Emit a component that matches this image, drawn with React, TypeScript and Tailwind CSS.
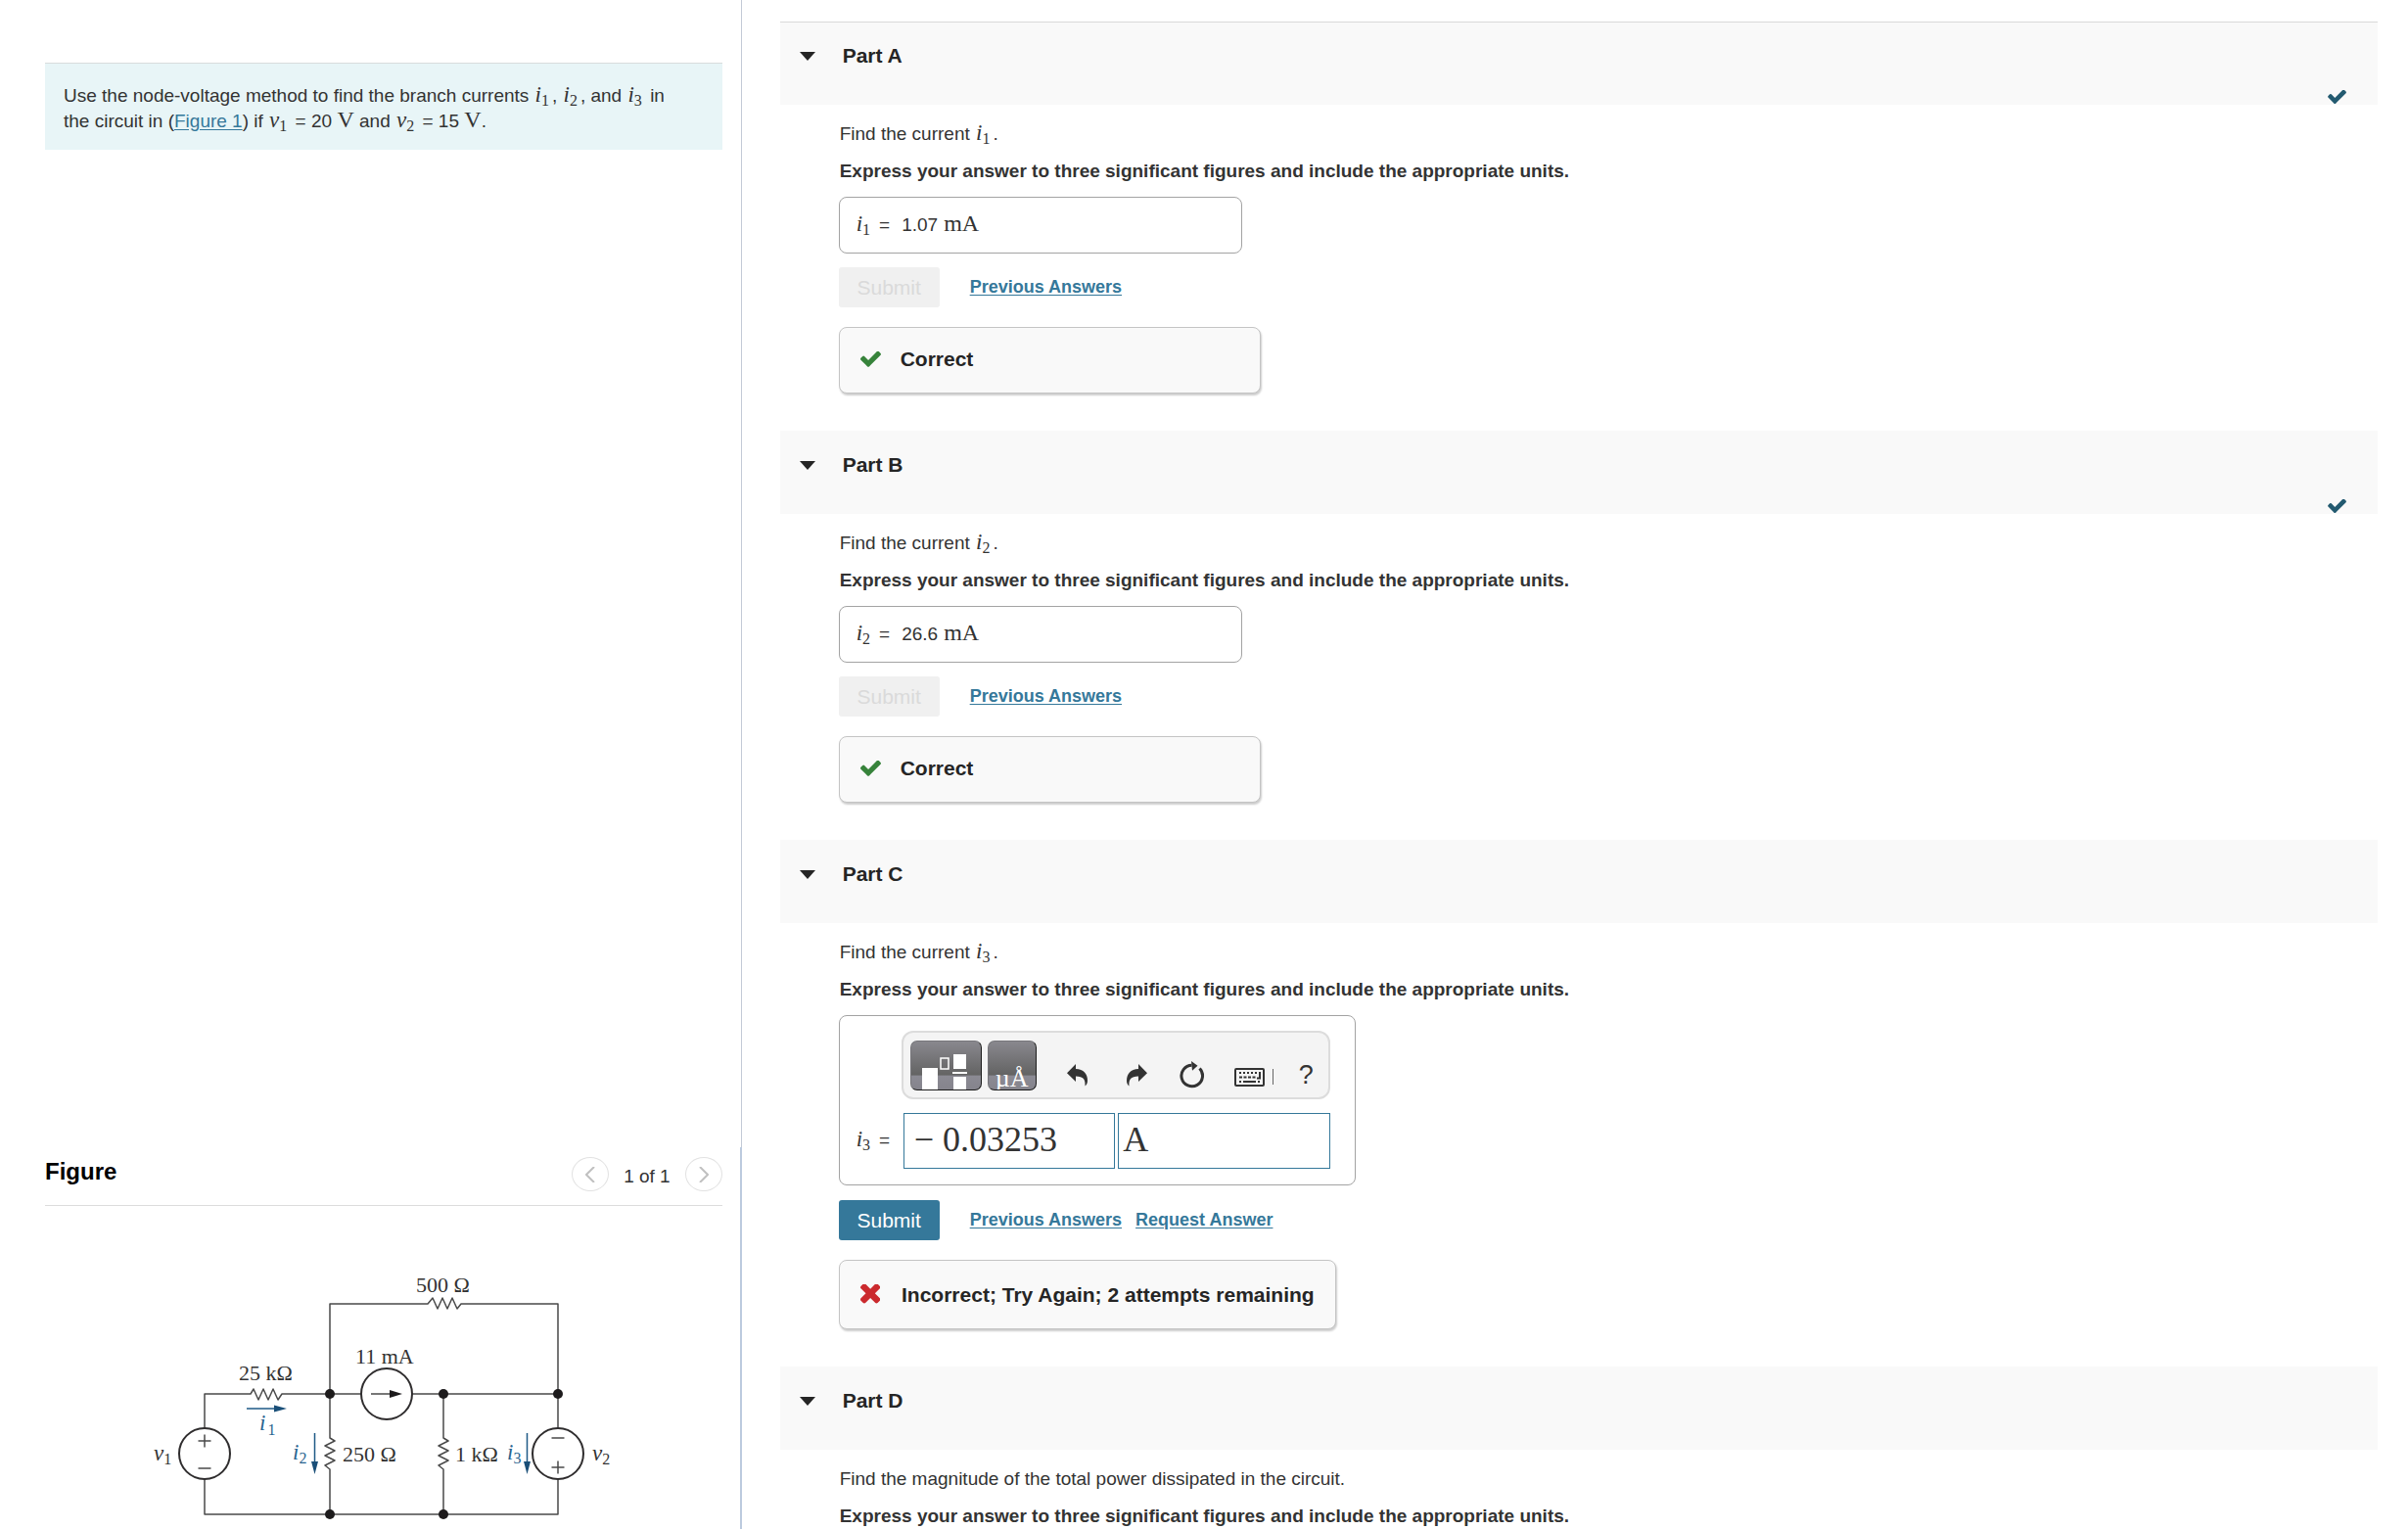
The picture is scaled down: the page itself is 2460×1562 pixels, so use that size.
import React, { useState } from "react";

function MathVar({ name, sub }: { name: string; sub: string }) {
  return (
    <span className="mr-[3px] ml-px font-['Liberation_Serif',serif] text-[23px] leading-none italic whitespace-nowrap">
      {name}
      <sub className="text-[16px] not-italic">{sub}</sub>
    </span>
  );
}

function Unit({ children }: { children: React.ReactNode }) {
  return <span className="font-['Liberation_Serif',serif] text-[24px] leading-none">{children}</span>;
}

function CheckIcon({ className }: { className: string }) {
  return (
    <svg viewBox="121 370 1550 1152" className={className} fill="currentColor" aria-hidden="true">
      <path d="M1671 566q0 40-28 68l-724 724-136 136q-28 28-68 28t-68-28l-136-136-362-362q-28-28-28-68t28-68l136-136q28-28 68-28t68 28l294 295 656-657q28-28 68-28t68 28l136 136q28 28 28 68z" />
    </svg>
  );
}

function CrossIcon() {
  return (
    <svg viewBox="302 434 1188 1188" className="size-[21px] text-[#cb2a2e]" fill="currentColor" aria-hidden="true">
      <path d="M1490 1322q0 40-28 68l-136 136q-28 28-68 28t-68-28l-294-294-294 294q-28 28-68 28t-68-28l-136-136q-28-28-28-68t28-68l294-294-294-294q-28-28-28-68t28-68l136-136q28-28 68-28t68 28l294 294 294-294q28-28 68-28t68 28l136 136q28 28 28 68t-28 68l-294 294 294 294q28 28 28 68z" />
    </svg>
  );
}

const linkClass = "text-[18px] font-bold text-[#35789a] underline underline-offset-2 whitespace-nowrap";

function Part({
  letter,
  done,
  first,
  question,
  children,
}: {
  letter: string;
  done?: boolean;
  first?: boolean;
  question: React.ReactNode;
  children?: React.ReactNode;
}) {
  return (
    <section>
      <header
        className={
          "flex h-[85px] justify-between border-t bg-[#f9f9f9] pl-5 pr-8 " +
          (first ? "border-[#d9d9d9]" : "border-[#f9f9f9]")
        }
      >
        <button type="button" aria-expanded="true" className="flex h-[68px] items-center gap-7 text-[21px] font-bold text-[#252525]">
          <svg viewBox="0 0 16 9" className="h-[9px] w-4" fill="currentColor" aria-hidden="true">
            <path d="M0 0h16L8 9z" />
          </svg>
          <span>Part {letter}</span>
        </button>
        {done && <CheckIcon className="mb-px h-[14px] w-[19px] self-end text-[#235a70]" />}
      </header>
      <div className="pt-[17px] pl-[61px]">
        <p className="mb-[13px] h-[25px] leading-[25px]">{question}</p>
        <p className="mb-[14px] leading-[25px] font-bold">
          Express your answer to three significant figures and include the appropriate units.
        </p>
        {children}
      </div>
    </section>
  );
}

function SolvedAnswer({ sub, value }: { sub: string; value: string }) {
  return (
    <div className="-ml-px pb-[38px]">
      <div className="flex h-[58px] w-[412px] items-center rounded-lg border border-[#a3a3a3] px-4">
        <div className="flex items-baseline">
          <MathVar name="i" sub={sub} />
          <span className="mr-3 ml-[6px]">=</span>
          <span className="mr-[6px]">{value}</span>
          <Unit>mA</Unit>
        </div>
      </div>
      <div className="mt-[14px] flex items-center gap-[31px]">
        <button type="button" disabled className="h-[41px] w-[103px] rounded-[3px] bg-[#f0f0f0] text-[21px] text-[#dadada]">
          Submit
        </button>
        <a href="#previous" className={linkClass}>
          Previous Answers
        </a>
      </div>
      <div className="mt-5 flex h-[68px] w-[431px] items-center gap-5 rounded-lg border border-[#c4c4c4] bg-[#f9f9f9] px-[21px] pb-[2px] text-[21px] font-bold text-[#252525] shadow-[1px_2px_2px_rgba(0,0,0,0.2)]">
        <CheckIcon className="h-4 w-[21px] text-[#37833b]" />
        Correct
      </div>
    </div>
  );
}

const darkButton =
  "flex h-[51px] justify-center rounded-[7px] border border-t-[#77767b] border-l-[#77767b] border-r-[#1d1d1d] border-b-[#1d1d1d] bg-[linear-gradient(to_bottom,#89888e_0%,#636363_70%,#8b8a93_71%,#85848c_100%)] overflow-hidden";

function MathEditor() {
  const [value, setValue] = useState("\u2212 0.03253");
  const [units, setUnits] = useState("A");
  const field =
    "h-[57px] w-full min-w-0 border border-[#35789a] bg-white pb-[3px] font-['Liberation_Serif',serif] text-[36px] text-[#333] outline-none";
  return (
    <div className="h-[174px] w-[528px] rounded-lg border border-[#a3a3a3] pt-[15px] pr-[25px] pl-4">
      <div className="ml-[47px] flex h-[70px] items-center rounded-xl border-2 border-[#dcdcdc] bg-[#f4f4f4] pl-[7px] text-[#333]">
        <button type="button" aria-label="Templates" className={darkButton + " w-[73px]"}>
          <svg viewBox="0 0 71 49" className="block h-[49px] w-[71px]" aria-hidden="true">
            <rect x="11" y="27" width="16" height="22" fill="#fff" />
            <rect x="30" y="17" width="8" height="11" fill="none" stroke="#fff" strokeWidth="1.5" />
            <rect x="43" y="13" width="13" height="15" fill="#fff" />
            <rect x="42" y="31" width="15" height="2" fill="#fff" />
            <rect x="43" y="36" width="13" height="13" fill="#fff" />
          </svg>
        </button>
        <button
          type="button"
          aria-label="Symbols"
          className={darkButton + " ml-[6px] w-[50px] items-start pt-5 font-['Liberation_Serif',serif] text-[26px] leading-[36px] text-white"}
        >
          µÅ
        </button>
        <button type="button" aria-label="Undo" className="mt-5 ml-[31px]">
          <svg viewBox="0 0 21 23" className="h-[23px] w-[21px]" fill="currentColor">
            <path d="M0 9.3 9 0v5c8 0 12 5 12 12 0 2.500-1 4.500-2.500 5.500C19 16 17 12.500 9 12.500V18z" />
          </svg>
        </button>
        <button type="button" aria-label="Redo" className="mt-5 ml-[40px]">
          <svg viewBox="0 0 21 23" className="h-[23px] w-[21px]" fill="currentColor">
            <path d="M21 9.300 12 0v5C4 5 0 10 0 17c0 2.500 1 4.500 2.500 5.500C2 16 4 12.500 12 12.500V18z" />
          </svg>
        </button>
        <button type="button" aria-label="Reset" className="mt-5 ml-[33px]">
          <svg viewBox="0 0 26 28" className="h-7 w-[26px]">
            <path d="M20.500 7.500a10.800 10.800 0 1 1-8-3.300" fill="none" stroke="currentColor" strokeWidth="3" />
            <path d="M12 0l6.500 4.800L13 9.800z" fill="currentColor" />
          </svg>
        </button>
        <button type="button" aria-label="Keyboard shortcuts" className="mt-6 ml-[30px]">
          <svg viewBox="0 0 31 19" className="h-[19px] w-[31px]">
            <rect x="1" y="1" width="29" height="17" rx="1" fill="none" stroke="currentColor" strokeWidth="2" />
            <path d="M5 5h18" stroke="currentColor" strokeWidth="2" strokeDasharray="2 2" />
            <path d="M5 9.500h18" stroke="currentColor" strokeWidth="2" strokeDasharray="3 1.500" />
            <path d="M26 4v6.500h-3M5 14h2M9 14h13M24 14h2" fill="none" stroke="currentColor" strokeWidth="2" />
          </svg>
        </button>
        <span className="mt-6 ml-2 h-4 w-px bg-[#666]" />
        <button type="button" aria-label="Help" className="mt-5 ml-[26px] text-[27px] leading-none">
          ?
        </button>
      </div>
      <div className="mt-[14px] flex items-center gap-[3px]">
        <label htmlFor="answer-c" className="flex w-[46px] shrink-0 items-baseline gap-[6px]">
          <MathVar name="i" sub="3" />=
        </label>
        <div className="grid flex-1 grid-cols-2 gap-[3px]">
          <input id="answer-c" value={value} onChange={(e) => setValue(e.target.value)} className={field + " pl-[10px]"} />
          <input aria-label="Units" value={units} onChange={(e) => setUnits(e.target.value)} className={field + " pl-1"} />
        </div>
      </div>
    </div>
  );
}

function Circuit() {
  return (
    <svg viewBox="152 1300 480 262" className="mx-auto mt-[67px] block h-[262px] w-[480px]" role="img" aria-label="Circuit diagram">
      <g fill="none" stroke="#4a4a4a" strokeWidth="1.500" strokeLinejoin="round">
        <path d="M209 1460V1425h47l3-5 5 11 5-11 5 11 5-11 5 11 4-6h53" />
        <path d="M209 1512v36h361v-36" />
        <path d="M337 1425V1333h100l5-6 5 11 5-11 5 11 5-11 5 11 4-5h99v127" />
        <path d="M337 1425h32M421 1425h149" />
        <path d="M337 1425v45l5 3-10 5 10 5-10 5 10 5-10 5 5 4v46" />
        <path d="M453 1425v45l5 3-10 5 10 5-10 5 10 5-10 5 5 4v46" />
        <path d="M202.500 1473h13M209 1466.500v13M202.500 1501h13M563.500 1470h13M563.500 1500h13M570 1493.500v13" />
        <path d="M379 1425h22" />
      </g>
      <g fill="none" stroke="#2f2d2e" strokeWidth="2">
        <circle cx="209" cy="1486" r="26" />
        <circle cx="570" cy="1486" r="26" />
        <circle cx="395" cy="1425" r="26" />
      </g>
      <g fill="#1d1b1c">
        <circle cx="337" cy="1425" r="5" />
        <circle cx="453" cy="1425" r="5" />
        <circle cx="570" cy="1425" r="5" />
        <circle cx="337" cy="1548" r="5" />
        <circle cx="453" cy="1548" r="5" />
        <path d="M398 1421l13 4-13 4z" />
      </g>
      <g stroke="#1f5a86" strokeWidth="1.500">
        <path d="M252 1440h30M321.500 1465v30M538.500 1465v30" />
      </g>
      <g fill="#1a4f78">
        <path d="M280 1436.500l13 3.500-13 3.500zM318 1494l3.500 13 3.500-13zM535 1494l3.500 13 3.500-13z" />
      </g>
      <g className="font-['Liberation_Serif',serif] text-[22px]" fill="#333">
        <text x="425" y="1321">500 Ω</text>
        <text x="363" y="1394">11 mA</text>
        <text x="244" y="1411">25 kΩ</text>
        <text x="350" y="1494">250 Ω</text>
        <text x="465" y="1494">1 kΩ</text>
      </g>
      <g className="font-['Liberation_Serif',serif] text-[23px] italic" fill="#333">
        <text x="157" y="1493">v<tspan className="text-[16px] not-italic" dy="4">1</tspan></text>
        <text x="605" y="1493">v<tspan className="text-[16px] not-italic" dy="4">2</tspan></text>
        <g fill="#2a648f">
          <text x="265" y="1462">i<tspan className="text-[16px] not-italic" dx="2" dy="5">1</tspan></text>
          <text x="299" y="1492">i<tspan className="text-[16px] not-italic" dy="4">2</tspan></text>
          <text x="518" y="1492">i<tspan className="text-[16px] not-italic" dy="4">3</tspan></text>
        </g>
      </g>
    </svg>
  );
}

const navButton = "flex h-[35px] w-[38px] items-center justify-center rounded-[50%] border border-[#e2e2e2] text-[#c0c0c0]";

export default function App() {
  return (
    <div className="flex h-screen overflow-hidden bg-white font-['Liberation_Sans',Arial,sans-serif] text-[19px] text-[#333]">
      <aside className="flex w-[30.8%] shrink-0 flex-col">
        <div className="h-3/4 border-r border-[#c3cad6] pt-16 pr-[19px] pl-[46px]">
          <div className="border-t border-[#d9dcdc] bg-[#e8f5f7] px-[19px] pt-5 pb-[18px] leading-[25px]">
            <p className="h-[50px]">
              Use the node-voltage method to find the branch currents <MathVar name="i" sub="1" />,{" "}
              <MathVar name="i" sub="2" />, and <MathVar name="i" sub="3" /> in
              <br />
              the circuit in (
              <a href="#figure" className="text-[#35789a] underline underline-offset-2">
                Figure 1
              </a>
              ) if <MathVar name="v" sub="1" /> = 20 <Unit>V</Unit> and <MathVar name="v" sub="2" /> = 15 <Unit>V</Unit>.
            </p>
          </div>
        </div>
        <div id="figure" className="h-1/4 overflow-hidden border-r-2 border-[#bccade] pr-[18px] pl-[46px]">
          <div className="flex h-[60px] items-center justify-between border-b border-[#dcdcdc]">
            <h2 className="pb-2 text-[24px] font-bold text-black">Figure</h2>
            <div className="flex items-center gap-[15px] pb-[3px]">
              <button type="button" aria-label="Previous figure" className={navButton}>
                <svg viewBox="0 0 10 16" className="h-4 w-[10px]" fill="none" stroke="currentColor" strokeWidth="2">
                  <path d="M9 0 1 8l8 8" />
                </svg>
              </button>
              <span className="pt-[6px]">1 of 1</span>
              <button type="button" aria-label="Next figure" className={navButton}>
                <svg viewBox="0 0 10 16" className="h-4 w-[10px]" fill="none" stroke="currentColor" strokeWidth="2">
                  <path d="M1 0l8 8-8 8" />
                </svg>
              </button>
            </div>
          </div>
          <Circuit />
        </div>
      </aside>
      <main className="min-w-0 flex-1 overflow-hidden pt-[22px] pr-[31px] pl-[39px]">
        <Part letter="A" first done question={<>Find the current <MathVar name="i" sub="1" />.</>}>
          <SolvedAnswer sub="1" value="1.07" />
        </Part>
        <Part letter="B" done question={<>Find the current <MathVar name="i" sub="2" />.</>}>
          <SolvedAnswer sub="2" value="26.6" />
        </Part>
        <Part letter="C" question={<>Find the current <MathVar name="i" sub="3" />.</>}>
          <div className="-ml-px pb-[38px]">
            <MathEditor />
            <div className="mt-[15px] flex items-center">
              <button type="button" className="mr-[31px] h-[41px] w-[103px] rounded-[3px] bg-[#35789a] text-[21px] text-white">
                Submit
              </button>
              <a href="#previous" className={linkClass + " mr-[14px]"}>
                Previous Answers
              </a>
              <a href="#request" className={linkClass}>
                Request Answer
              </a>
            </div>
            <div className="mt-5 flex h-[71px] w-[508px] items-center gap-[22px] rounded-lg border border-[#c4c4c4] bg-[#f9f9f9] px-[21px] text-[21px] font-bold whitespace-nowrap text-[#252525] shadow-[1px_2px_2px_rgba(0,0,0,0.2)]">
              <CrossIcon />
              Incorrect; Try Again; 2 attempts remaining
            </div>
          </div>
        </Part>
        <Part letter="D" question="Find the magnitude of the total power dissipated in the circuit." />
      </main>
    </div>
  );
}
